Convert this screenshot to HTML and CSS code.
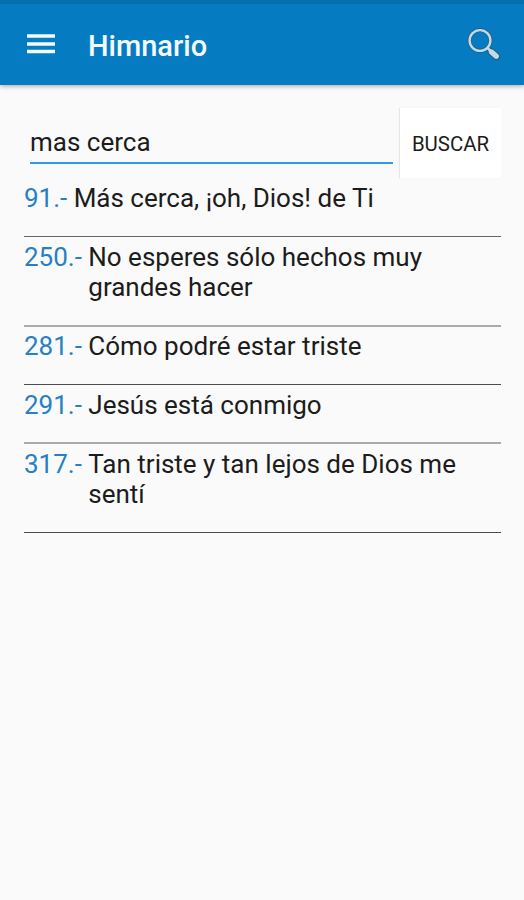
FILE: index.html
```html
<!DOCTYPE html>
<html lang="es">
<head>
<meta charset="utf-8">
<title>Himnario</title>
<link rel="stylesheet" href="styles.css">
</head>
<body>
<header class="bar">
<svg class="menu" width="28" height="20" viewBox="0 0 28 20"><path d="M0 2h28M0 10h28M0 17.5h28" stroke="#f4faff" stroke-width="3.6"/></svg>
<h1>Himnario</h1>
<svg class="search" width="36" height="36" viewBox="0 0 36 36" fill="none"><path d="M21 20.5L25 24.5" stroke="#315a78" stroke-width="5"/><path d="M25.5 25L30.5 29.5" stroke="#315a78" stroke-width="7.5" stroke-linecap="round"/><circle cx="14" cy="13.5" r="10.5" stroke="#315a78" stroke-width="4"/><circle cx="14" cy="13.5" r="10.4" stroke="#b9dcef" stroke-width="2.4"/><path d="M21 20.5L25 24.5" stroke="#b9dcef" stroke-width="2.5"/><path d="M25.5 25L30.3 29.3" stroke="#b9dcef" stroke-width="5.3" stroke-linecap="round"/></svg>
</header>
<main>
<div class="form"><div class="field">mas cerca</div><button>BUSCAR</button></div>
<ul>
<li class="first"><span class="num">91.-</span><span>Más cerca, ¡oh, Dios! de Ti</span></li>
<li class="long soft"><span class="num">250.-</span><span>No esperes sólo hechos muy<br>grandes hacer</span></li>
<li class="short"><span class="num">281.-</span><span>Cómo podré estar triste</span></li>
<li class="soft"><span class="num">291.-</span><span>Jesús está conmigo</span></li>
<li class="long"><span class="num">317.-</span><span>Tan triste y tan lejos de Dios me<br>sentí</span></li>
</ul>
</main>
</body>
</html>
```
FILE: styles.css
```css
* { box-sizing: border-box; }
body { margin: 0; height: 900px; background: #fafafa; color: #1c1c1c; font-family: Roboto, sans-serif; }
.bar { height: 85px; background: #057cc1; border-top: 4px solid #0371ad; display: flex; align-items: center; padding: 0 22px 0 27px; box-shadow: 0 1px 5px rgba(0,0,0,.35); }
.menu { margin: 0 33px 2px 0; }
h1 { margin: 2px auto 0 0; font-size: 29px; font-weight: 500; color: #f4faff; }
.search { margin-top: 1px; }
main { padding: 23px 23px 0 24px; }
.form { display: flex; height: 70px; }
.field { width: 363px; height: 56px; margin: 0 7px 0 6px; border-bottom: 2px solid #2e9be0; font-size: 26px; line-height: 69px; }
button { flex: 1; border: 0; padding: 2px 0 0; background: #fff; font: 400 20.4px Roboto, sans-serif; color: #1c1c1c; box-shadow: -1px 0 1px rgba(0,0,0,.08); }
ul { list-style: none; margin: 0; padding: 0; }
li { display: flex; gap: 6.4px; height: 59px; padding-top: 4.5px; border-bottom: 1px solid #4c4c4c; font-size: 26px; line-height: 30.5px; white-space: nowrap; }
.first { padding-top: 5px; border-color: #666; }
.long { height: 89px; }
.short { height: 58px; padding-top: 4px; }
.soft { border-bottom: 2px solid #aaa; }
.long.soft { height: 90px; }
.num { color: #2680c4; }
```
